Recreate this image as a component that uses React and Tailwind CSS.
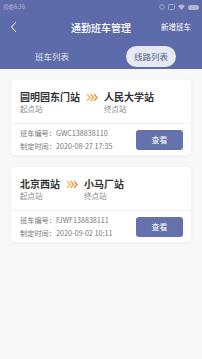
const routes = [
  {
    from: '圆明园东门站',
    to: '人民大学站',
    code: 'GWC138838110',
    time: '2020-08-27 17:35',
  },
  {
    from: '北京西站',
    to: '小马厂站',
    code: 'FJWF138838111',
    time: '2020-09-02 10:11',
  },
];

const Chevrons = () => (
  <svg width="12" height="9" viewBox="0 0 12 9" className="mt-[3px]">
    <defs>
      <linearGradient id="chev" x1="0" y1="0" x2="1" y2="0">
        <stop offset="0" stopColor="#f7c56c" />
        <stop offset="1" stopColor="#ee8838" />
      </linearGradient>
    </defs>
    <path
      d="M1 1l3 3.5L1 8M4.5 1l3 3.5L4.5 8M8 1l3 3.5L8 8"
      fill="none"
      stroke="url(#chev)"
      strokeWidth="1.5"
      strokeLinejoin="miter"
    />
  </svg>
);

const RouteCard = ({ route }) => (
  <div className="bg-white rounded-[4px] shadow-[0_1px_4px_rgba(0,0,0,0.06)]">
    {/* Stations */}
    <div className="pt-[10px] px-[9px] pb-[9px] flex items-start gap-[6px] border-b border-[#f1f1f1]">
      <div>
        <div className="text-[10px] leading-[14px] font-bold text-[#333]">{route.from}</div>
        <div className="text-[7.5px] leading-[10px] text-[#8a8a8a]">起点站</div>
      </div>
      <Chevrons />
      <div>
        <div className="text-[10px] leading-[14px] font-bold text-[#333]">{route.to}</div>
        <div className="text-[7.5px] leading-[10px] text-[#8a8a8a]">终点站</div>
      </div>
    </div>

    {/* Info */}
    <div className="h-[31px] pl-[9px] pr-[8px] flex items-center justify-between">
      <div className="text-[7.2px] leading-[13px] text-[#777]">
        <div>班车编号：{route.code}</div>
        <div>制定时间：{route.time}</div>
      </div>
      <button className="w-[47px] h-[20px] rounded-[3px] bg-[#6571aa] text-white text-[8px]">
        查看
      </button>
    </div>
  </div>
);

export default function App() {
  return (
    <div
      className="w-[202px] h-[359px] bg-[#f8f8f8] overflow-hidden"
      style={{ fontFamily: '"Noto Sans CJK SC", "Noto Sans", sans-serif' }}
    >
      {/* Header */}
      <div className="bg-[#5e6baa] h-[69px]">
        {/* Status bar */}
        <div className="h-[14px] px-[3px] flex items-center justify-between">
          <span className="text-[5.5px] text-white/50">傍晚6:36</span>
          <div className="flex items-center gap-[3px] opacity-50">
            <svg width="6" height="6" viewBox="0 0 6 6">
              <circle cx="3" cy="3" r="2.3" fill="none" stroke="white" strokeWidth="0.8" />
            </svg>
            <svg width="7" height="6" viewBox="0 0 7 6">
              <rect x="0.5" y="0.5" width="6" height="5" rx="0.8" fill="none" stroke="white" strokeWidth="0.8" />
            </svg>
            <svg width="7" height="6" viewBox="0 0 7 6">
              <path d="M0 2a5 5 0 0 1 7 0L3.5 6z" fill="white" />
            </svg>
            <div className="w-[11px] h-[5px] rounded-full bg-white" />
          </div>
        </div>

        {/* Title row */}
        <div className="h-[26px] flex items-center px-[8px] relative">
          <svg width="8" height="12" viewBox="0 0 8 12" className="ml-[2px]">
            <path d="M6 1L1.5 6 6 11" fill="none" stroke="white" strokeWidth="1" />
          </svg>
          <div className="absolute left-0 right-0 text-center text-[10px] text-white font-medium pointer-events-none">
            通勤班车管理
          </div>
          <div className="ml-auto mr-[3px] text-[7.5px] text-white">新增班车</div>
        </div>

        {/* Tabs */}
        <div className="mt-[6px] flex items-center">
          <span className="ml-[35px] text-[8.5px] leading-[21px] text-[#dfe2f0]">班车列表</span>
          <span className="ml-auto mr-[26px] h-[21px] px-[8px] rounded-full bg-[#e6e8f2] text-[8.5px] leading-[21px] text-[#56618f]">
            线路列表
          </span>
        </div>
      </div>

      {/* List */}
      <div className="px-[11px] pt-[11px] flex flex-col gap-[12px]">
        {routes.map((r) => (
          <RouteCard key={r.code} route={r} />
        ))}
      </div>
    </div>
  );
}
